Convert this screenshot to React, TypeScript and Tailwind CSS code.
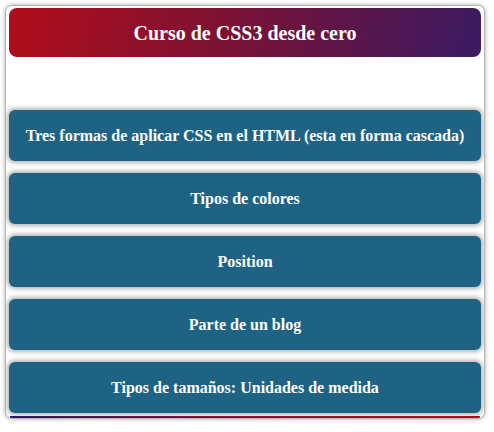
import React from "react";

const items = [
  "Tres formas de aplicar CSS en el HTML (esta en forma cascada)",
  "Tipos de colores",
  "Position",
  "Parte de un blog",
  "Tipos de tamaños: Unidades de medida",
];

export default function App() {
  return (
    <div className="w-[494px] h-[432px] bg-white pt-[5px] pl-[5px]" style={{ fontFamily: '"Liberation Serif", "Times New Roman", serif' }}>
      <div className="w-[480px] h-[414px] border border-[#b5b5b5] rounded-[7px] shadow-[0_0_4px_rgba(0,0,0,0.35)] overflow-hidden px-[3px] pt-[2px] bg-white">
        <div className="h-[49px] rounded-[8px] bg-[linear-gradient(100deg,#b10d19_0%,#7c1233_45%,#3a1a62_100%)] flex items-center justify-center">
          <h1 className="text-white font-bold text-[20px] leading-none">Curso de CSS3 desde cero</h1>
        </div>
        <div className="mt-[53px] flex flex-col gap-[12px]">
          {items.map((t) => (
            <div
              key={t}
              className="h-[51px] rounded-[6px] bg-[#1e6384] shadow-[0_0_4px_2px_rgba(0,0,0,0.3)] flex items-center justify-center pt-[1px]"
            >
              <span className="text-white font-bold text-[16px] leading-none">{t}</span>
            </div>
          ))}
          <div className="h-[2px] -mt-[9px] mx-[1px] bg-[linear-gradient(90deg,#2a1a5c,#8a1030,#b10d19)]" />
        </div>
      </div>
    </div>
  );
}
